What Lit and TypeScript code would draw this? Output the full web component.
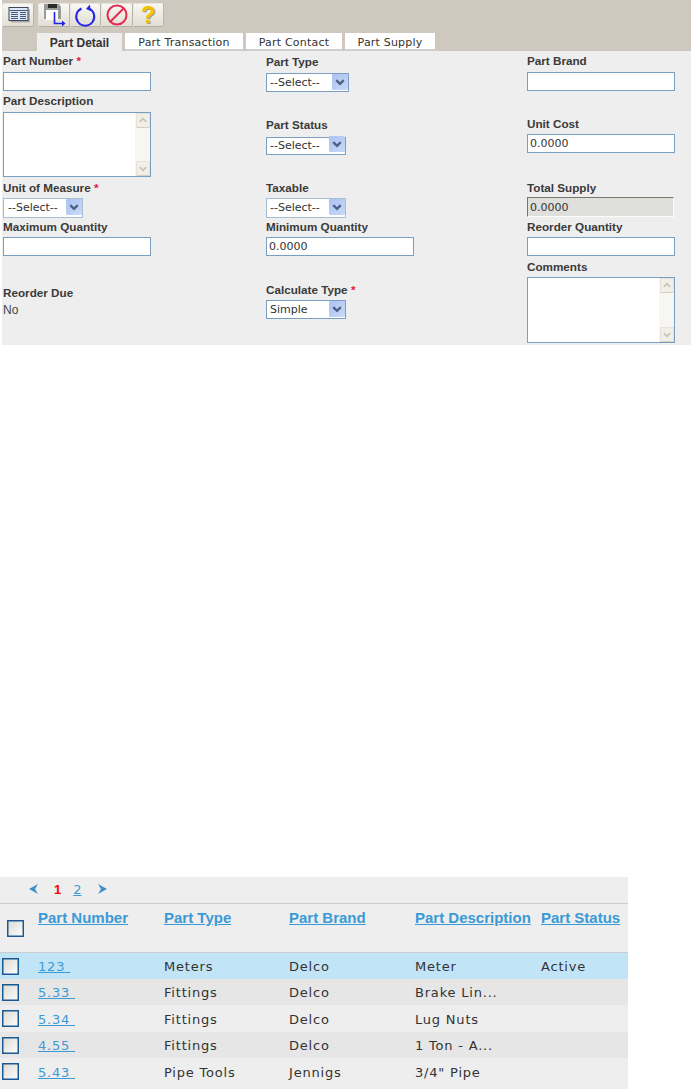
import { LitElement, html, css, svg } from "lit";
import { customElement } from "lit/decorators.js";

const arrow = html`<svg class="sel-arrow" viewBox="0 0 17 17" aria-hidden="true">
  <path d="M4.500 6.500 8.500 10.500 12.500 6.500" fill="none" stroke="#4d6185" stroke-width="2.400"/>
</svg>`;

const scrollbar = html`<div class="scrollbar" aria-hidden="true">
  <span class="sb-btn"><svg viewBox="0 0 13 14"><path d="M3 8.500 6.500 5 10 8.500" fill="none" stroke="#c9c8bc" stroke-width="2"/></svg></span>
  <span class="sb-btn"><svg viewBox="0 0 13 14"><path d="M3 5.500 6.500 9 10 5.500" fill="none" stroke="#c9c8bc" stroke-width="2"/></svg></span>
</div>`;

const icons = [
  svg`<rect x="3.500" y="5" width="19" height="13" fill="#555" opacity=".4" transform="translate(1.500 1.500)"/>
      <rect x="3" y="4.500" width="19" height="13" fill="#dbe8f8" stroke="#3a4660"/>
      <path d="M3.500 7.500h18M5 9.500h7M14 9.500h6M5 11.500h7M14 11.500h6M5 13.500h7M14 13.500h6M5 15.500h7M14 15.500h6" stroke="#4a5876" stroke-width="1"/>`,
  svg`<path d="M2 1h15l2 3v12H2z" fill="#9a9a9a"/>
      <rect x="6" y="1" width="9" height="4" fill="#2b2b2b"/>
      <rect x="4" y="7" width="12" height="10" fill="#fff"/>
      <path d="M12.500 9v11.500H21" fill="none" stroke="#2121e0" stroke-width="1.600"/>
      <path d="M20 17.500l3.500 3-3.500 3z" fill="#2121e0"/>`,
  svg`<path d="M8.500 5.500A9 9 0 1 0 16 5.500" fill="none" stroke="#2525e6" stroke-width="2"/>
      <path d="M16.800 1.500 13 6 17.800 8z" fill="#2525e6"/>`,
  svg`<circle cx="12" cy="12" r="9.500" fill="none" stroke="#e42b50" stroke-width="2"/>
      <path d="M5.500 18.500 18.500 5.500" stroke="#e42b50" stroke-width="2"/>`,
];

@customElement("app-root")
export class AppRoot extends LitElement {
  static styles = css`
    :host { display: block; width: 691px; height: 1089px; overflow: hidden; background: #fff;
      font-family: "Liberation Sans", Arial, sans-serif; color: #333; }
    .panel { margin-left: 2px; }
    .top { background: #cfc8bf; height: 51px; box-sizing: border-box; padding-top: 3px; }
    .tools { display: flex; height: 24px; }
    .tool { box-sizing: border-box; width: 31.500px; height: 24px; display: flex; align-items: center; justify-content: center;
      padding: 0; border: 1px solid #e9e5dd; border-right-color: #b9b4a8; border-bottom-color: #b5b0a4;
      border-radius: 2px; background: linear-gradient(#f8f7f3, #e2ded5); }
    .tool.first { margin-right: 4px; width: 32px; }
    .tool svg { width: 24px; height: 24px; display: block; }
    .q { font: bold 24px/24px "Liberation Sans", sans-serif; color: #f2c200; text-shadow: 1px 1px 0 #a89c70; }
    .tabs { display: flex; margin: 6px 0 0 35px; height: 18px; gap: 3px; }
    .tab { box-sizing: border-box; height: 18px; background: #fff; border-bottom: 2px solid #cfcfcf;
      display: flex; align-items: center; justify-content: center; font: 11px "DejaVu Sans", sans-serif;
      color: #333; letter-spacing: .2px; padding-top: 3px; }
    .tab.active { background: #eee; border-bottom: 0; padding-top: 1px; font: bold 12px "Liberation Sans", sans-serif; letter-spacing: 0; }
    .form { background: #eee; height: 294px; box-sizing: border-box; padding: 2px 0 0 1px; display: grid;
      grid-template-columns: 263px 261px 1fr; grid-template-rows: 38px 86px 40px 39px 87px; align-items: center; }
    .f { display: flex; flex-direction: column; align-items: flex-start; }
    .f.end { align-self: end; }
    .f.mid-row { align-self: end; margin-bottom: 24px; }
    .f.tight label { margin-bottom: 3px; }
    .f.low { padding-top: 2px; }
    .f.lower { padding-top: 4px; }
    label, .lab { display: block; font-size: 11.700px; line-height: 13px; font-weight: bold; color: #3a3a3a; margin-bottom: 4px; white-space: nowrap; }
    .f.first-row label { margin-bottom: 5px; }
    .req { color: #e8143c; }
    input[type="text"], textarea { box-sizing: border-box; width: 148px; height: 19px; border: 1px solid #7a9ebf; background: #fff;
      margin: 0; padding: 0 2px; font: 11px "DejaVu Sans", sans-serif; letter-spacing: 0; color: #333; outline: none; border-radius: 0; }
    input[disabled] { height: 20px; width: 147px; background: #dfdfdc; border: 1px solid; border-color: #77766e #fbfbf8 #fbfbf8 #77766e; }
    .ta { position: relative; width: 148px; }
    textarea { display: block; resize: none; overflow: hidden; height: 66px; }
    .ta.short textarea { height: 65px; }
    .scrollbar { position: absolute; right: 1px; top: 1px; bottom: 1px; width: 15px; background: #f7f6f2;
      display: flex; flex-direction: column; justify-content: space-between; align-items: center; }
    .sb-btn { width: 14px; height: 15px; background: #f1efe7; border: 1px solid #e6e3d8; border-bottom-color: #d4d0bd; box-sizing: border-box; border-radius: 1px; }
    .sb-btn svg { display: block; width: 12px; height: 13px; }
    .sel { position: relative; width: 80px; height: 19px; }
    .sel.wide { width: 83px; }
    .sel.short { height: 18px; }
    .sel.pale { height: 20px; }
    .sel.measure select { padding-left: 4px; }
    .sel select { appearance: none; box-sizing: border-box; width: 100%; height: 100%; margin: 0; padding: 0 0 0 3px; border: 1px solid #7a9ebf;
      background: #fff; border-radius: 0; font: 11px "DejaVu Sans", sans-serif; color: #333; outline: none; }
    .sel.pale select { border-color: #a7bdd4; }
    .sel-arrow { position: absolute; right: 1.500px; top: 50%; margin-top: -8px; width: 16px; height: 16px; background: linear-gradient(135deg, #aac3f2, #c9d9f8); border-radius: 1px; }
    .val { font-size: 12px; line-height: 14px; color: #444; }
    .grid-wrap { margin-top: 532px; width: 628px; background: #eee; height: 212px; overflow: hidden; }
    .pager { border-bottom: 1px solid #ccc; display: flex; align-items: center; padding: 0 0 2px 28px; box-sizing: border-box; height: 27px; }
    .pager svg { width: 12px; height: 12px; display: block; }
    .pager .cur { font: bold 13px "Liberation Sans", sans-serif; color: #f00; margin: 0 0 0 14px; }
    .pager a { font: 13px "DejaVu Sans", sans-serif; margin: 0 14px 0 12px; }
    a { color: #3a9ad6; text-decoration: underline; }
    table { border-collapse: collapse; table-layout: fixed; width: 628px; font: 13px "DejaVu Sans", sans-serif; color: #333; letter-spacing: .8px; }
    th { height: 48px; border-bottom: 1px solid #ccc; padding: 0 0 16px; text-align: left; vertical-align: top; font-weight: normal; box-sizing: border-box; white-space: nowrap; }
    th a { font: bold 15px "Liberation Sans", sans-serif; letter-spacing: 0; display: inline-block; padding-top: 5px; }
    td { height: 26.500px; padding: 2px 0 0; box-sizing: border-box; white-space: nowrap; }
    td a { font-weight: normal; text-decoration-thickness: 1px; }
    tr.sel-row td { background: #c2e4f7; }
    tr.alt td { background: #e6e6e6; }
    .cb { appearance: none; display: block; margin: 0; box-sizing: border-box; width: 17px; height: 17px; border: 1px solid #1a5a94;
      background: linear-gradient(135deg, #dcdad3, #fdfdfb); border-radius: 0; box-shadow: inset 0 0 0 0.500px #1a5a94; }
    td.c { padding: 1px 0 0 2px; }
    th.c { padding: 16px 0 0 7px; }
  `;

  private field(label: string, ctl: unknown, req = false, cls = "") {
    return html`<div class="f ${cls}"><label>${label}${req ? html` <span class="req">*</span>` : ""}</label>${ctl}</div>`;
  }
  private input(v = "") { return html`<input type="text" .value=${v} />`; }
  private select(v = "--Select--", cls = "") {
    return html`<div class="sel ${cls}"><select><option>${v}</option></select>${arrow}</div>`;
  }
  private area(cls = "") { return html`<div class="ta ${cls}"><textarea></textarea>${scrollbar}</div>`; }

  render() {
    const rows = [
      ["123", "Meters", "Delco", "Meter", "Active"],
      ["5.33", "Fittings", "Delco", "Brake Lin...", ""],
      ["5.34", "Fittings", "Delco", "Lug Nuts", ""],
      ["4.55", "Fittings", "Delco", "1 Ton - A...", ""],
      ["5.43", "Pipe Tools", "Jennigs", '3/4" Pipe', ""],
    ];
    return html`
      <div class="panel">
        <div class="top">
          <div class="tools">
            ${icons.map((ic, i) => html`<button class="tool ${i === 0 ? "first" : ""}"><svg viewBox="0 0 24 24">${ic}</svg></button>`)}
            <button class="tool"><span class="q">?</span></button>
          </div>
          <div class="tabs">
            <div class="tab active" style="width:85px">Part Detail</div>
            <div class="tab" style="width:118px">Part Transaction</div>
            <div class="tab" style="width:96px">Part Contact</div>
            <div class="tab" style="width:90px">Part Supply</div>
          </div>
        </div>
        <div class="form">
          ${this.field("Part Number", this.input(), true, "end first-row")}
          ${this.field("Part Type", this.select("--Select--", "wide"), false, "end")}
          ${this.field("Part Brand", this.input(), false, "end first-row")}
          ${this.field("Part Description", this.area("short"), false, "end first-row")}
          ${this.field("Part Status", this.select("--Select--", "short"), false, "mid-row")}
          ${this.field("Unit Cost", this.input("0.0000"), false, "mid-row")}
          ${this.field("Unit of Measure", this.select("--Select--", "pale measure"), true, "end tight")}
          ${this.field("Taxable", this.select("--Select--", "pale"), false, "end tight")}
          ${this.field("Total Supply", html`<input type="text" disabled .value=${"0.0000"} />`, false, "end tight")}
          ${this.field("Maximum Quantity", this.input(), false, "end")}
          ${this.field("Minimum Quantity", this.input("0.0000"), false, "end")}
          ${this.field("Reorder Quantity", this.input(), false, "end")}
          <div class="f lower"><div class="lab">Reorder Due</div><div class="val">No</div></div>
          ${this.field("Calculate Type", this.select("Simple"), true, "tight low")}
          ${this.field("Comments", this.area(), false, "end")}
        </div>
      </div>
      <div class="grid-wrap">
        <div class="pager">
          <svg viewBox="0 0 12 12"><path d="M10 1 1 6l9 5-3-5z" fill="#3f8fc4"/></svg>
          <span class="cur">1</span><a href="#">2</a>
          <svg viewBox="0 0 12 12"><path d="M2 1l9 5-9 5 3-5z" fill="#3f8fc4"/></svg>
        </div>
        <table>
          <colgroup><col style="width:38px"/><col style="width:126px"/><col style="width:125px"/><col style="width:126px"/><col style="width:126px"/><col style="width:87px"/></colgroup>
          <thead><tr>
            <th class="c"><input class="cb" type="checkbox" /></th>
            ${["Part Number", "Part Type", "Part Brand", "Part Description", "Part Status"].map((h) => html`<th><a href="#">${h}</a></th>`)}
          </tr></thead>
          <tbody>
            ${rows.map((r, i) => html`<tr class="${i === 0 ? "sel-row" : i % 2 ? "alt" : ""}">
              <td class="c"><input class="cb" type="checkbox" /></td>
              <td><a href="#">${r[0]}&nbsp;</a></td>
              ${r.slice(1).map((c) => html`<td>${c}</td>`)}
            </tr>`)}
          </tbody>
        </table>
      </div>
    `;
  }
}
